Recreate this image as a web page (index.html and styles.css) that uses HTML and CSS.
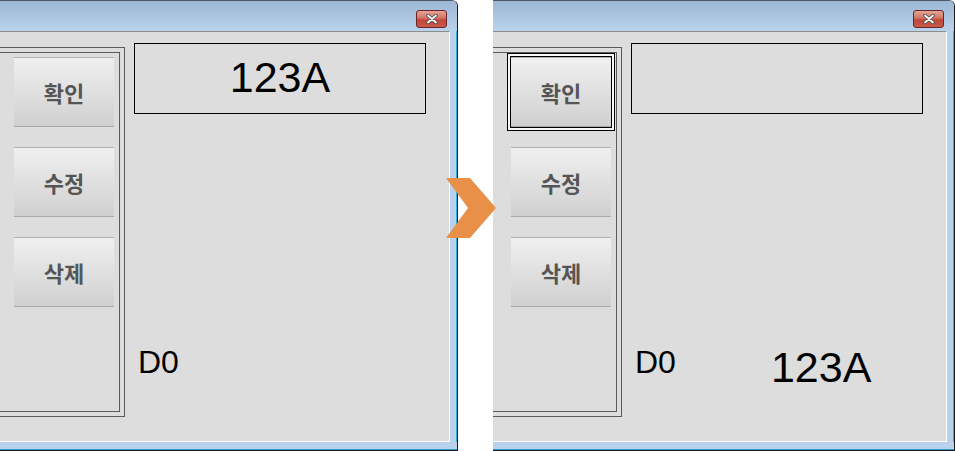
FILE: index.html
```html
<!DOCTYPE html>
<html lang="ko">
<head>
    <meta charset="UTF-8">
    <title>Form before / after</title>
    <link rel="stylesheet" href="styles.css">
</head>
<body>

<div class="desk">

    <!-- before -->
    <div class="window win-before">
        <div class="titlebar">
            <span class="close">
                <svg width="12" height="10" viewBox="0 0 12 10">
                    <path d="M2 1.5 L10 8.5 M10 1.5 L2 8.5" stroke="#4a4a4a" stroke-width="3.6" stroke-linecap="round"/>
                    <path d="M2 1.5 L10 8.5 M10 1.5 L2 8.5" stroke="#fff" stroke-width="1.8" stroke-linecap="round"/>
                </svg>
            </span>
        </div>
        <div class="frame-row">
            <div class="client">
                <div class="groupbox">
                    <div class="groupbox-inner">
                        <div class="btn">확인</div>
                        <div class="btn">수정</div>
                        <div class="btn">삭제</div>
                    </div>
                </div>
                <div class="fields">
                    <div class="textbox">123A</div>
                    <div class="labels">
                        <span class="label-name">D0</span>
                    </div>
                </div>
            </div>
            <div class="frame-side"></div>
        </div>
        <div class="frame-bottom"></div>
    </div>

    <svg class="arrow" width="51" height="61" viewBox="0 0 51 61">
        <polygon points="0,0 24,0 50,30 24,60 0,60 22,30" fill="#e99048"/>
    </svg>

    <!-- after -->
    <div class="window">
        <div class="titlebar">
            <span class="close">
                <svg width="12" height="10" viewBox="0 0 12 10">
                    <path d="M2 1.5 L10 8.5 M10 1.5 L2 8.5" stroke="#4a4a4a" stroke-width="3.6" stroke-linecap="round"/>
                    <path d="M2 1.5 L10 8.5 M10 1.5 L2 8.5" stroke="#fff" stroke-width="1.8" stroke-linecap="round"/>
                </svg>
            </span>
        </div>
        <div class="frame-row">
            <div class="client">
                <div class="groupbox">
                    <div class="groupbox-inner">
                        <div class="btn btn-focus">확인</div>
                        <div class="btn">수정</div>
                        <div class="btn">삭제</div>
                    </div>
                </div>
                <div class="fields">
                    <div class="textbox"></div>
                    <div class="labels">
                        <span class="label-name">D0</span>
                        <span class="label-value">123A</span>
                    </div>
                </div>
            </div>
            <div class="frame-side"></div>
        </div>
        <div class="frame-bottom"></div>
    </div>

</div>

</body>
</html>
```

FILE: styles.css
```css
body {
    margin: 0;
    background: #fff;
    font-family: "Liberation Sans", Arial, sans-serif;
    color: #000;
}
.desk {
    position: relative;
    display: flex;
    gap: 35px;
    width: 955px;
    height: 451px;
    overflow: hidden;
}

/* window chrome */
.window {
    flex: none;
    width: 462px;
    height: 451px;
    box-sizing: border-box;
    display: flex;
    flex-direction: column;
    border-top: 1px solid #505a66;
    border-right: 1px solid #1b1b1b;
    border-bottom: 1px solid #1b1b1b;
    border-top-right-radius: 6px;
    overflow: hidden;
}
.win-before {
    margin-left: -4px;
}
.titlebar {
    flex: none;
    height: 30px;
    display: flex;
    justify-content: flex-end;
    align-items: flex-start;
    padding-right: 10px;
    background: linear-gradient(#9cb7d5, #bad3ec);
}
.close {
    width: 31px;
    height: 18px;
    margin-top: 9px;
    box-sizing: border-box;
    display: flex;
    align-items: center;
    justify-content: center;
    border: 1px solid #6a2424;
    border-radius: 3px;
    background: linear-gradient(#e6a496 0%, #d07464 45%, #c0463a 55%, #c85a48 100%);
}
.frame-row {
    flex: none;
    height: 411px;
    display: flex;
}
.frame-side {
    width: 6px;
    border-right: 1px solid #2cb2e0;
    background: #b9d1ea;
}
.frame-bottom {
    flex: none;
    height: 7px;
    border-bottom: 1px solid #2a9fd0;
    background: #b9d1ea;
}

/* client area */
.client {
    width: 454px;
    box-sizing: border-box;
    display: flex;
    align-items: flex-start;
    overflow: hidden;
    background: #dddddd;
    border-top: 1px solid #8c8c8c;
    border-right: 1px solid #fff;
    border-bottom: 1px solid #fff;
}
.groupbox {
    flex: none;
    width: 159px;
    height: 370px;
    margin: 15px 0 0 -30px;
    padding: 4px;
    box-sizing: border-box;
    border: 1px solid #5a5a5a;
}
.groupbox-inner {
    height: 100%;
    box-sizing: border-box;
    border: 1px solid #5a5a5a;
    display: flex;
    flex-direction: column;
    align-items: flex-end;
    gap: 20px;
    padding: 4px 5px 0 0;
}
.btn {
    width: 100px;
    height: 70px;
    box-sizing: border-box;
    display: flex;
    align-items: center;
    justify-content: center;
    border-top: 1px solid #b0b0b0;
    border-bottom: 1px solid #a8a8a8;
    background: linear-gradient(#f0f0f0, #d0d0d0);
    font-family: "Noto Sans CJK KR", sans-serif;
    font-weight: bold;
    font-size: 22px;
    color: #555;
}
.btn-focus {
    box-shadow: 0 0 0 1px #000, 0 0 0 3px #f6f6f6, 0 0 0 4px #000;
}
.fields {
    flex: none;
    margin: 11px 0 0 9px;
    display: flex;
    flex-direction: column;
}
.textbox {
    width: 292px;
    height: 71px;
    box-sizing: border-box;
    border: 1px solid #000;
    text-align: center;
    font-size: 43px;
    line-height: 66px;
}
.labels {
    margin-top: 228px;
    display: flex;
    align-items: flex-start;
}
.label-name {
    padding-left: 4px;
    font-size: 32px;
    line-height: 40px;
}
.label-value {
    margin-left: 95px;
    font-size: 43px;
    line-height: 50px;
}

.arrow {
    position: absolute;
    left: 446px;
    top: 178px;
}
```
